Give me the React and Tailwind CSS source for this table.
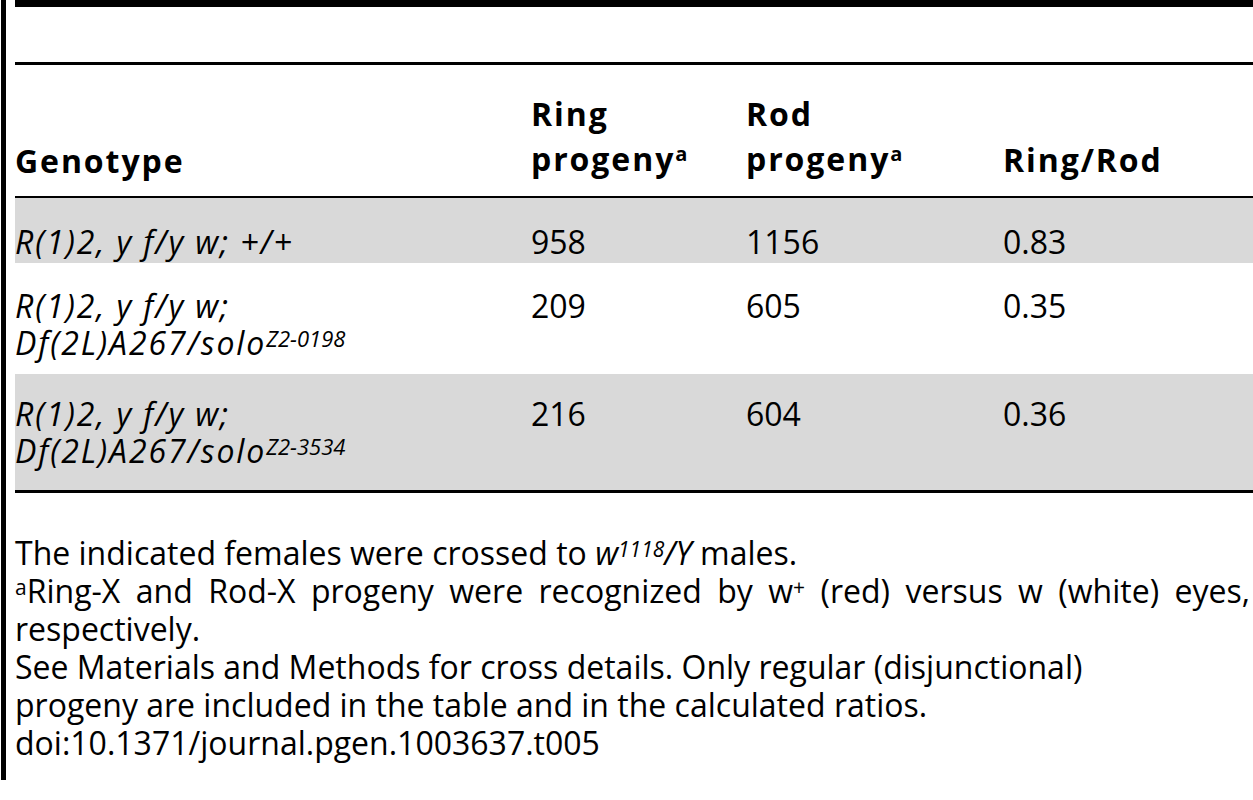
import React from 'react';

const rows = [
  { g1: 'R(1)2, y f/y w; +/+', g2: null, ring: '958', rod: '1156', ratio: '0.83', shade: true, h: 'h-[66px]', pt: 'pt-[25px]' },
  { g1: 'R(1)2, y f/y w;', g2: 'Z2-0198', ring: '209', rod: '605', ratio: '0.35', shade: false, h: 'h-[111px]', pt: 'pt-[24px]' },
  { g1: 'R(1)2, y f/y w;', g2: 'Z2-3534', ring: '216', rod: '604', ratio: '0.36', shade: true, h: 'h-[116px]', pt: 'pt-[21px]' },
];

const App = () => {
  return (
    <div className="w-[1253px] h-[800px] bg-white text-black font-['Open_Sans',sans-serif] text-[32px] leading-[37px] pl-px">
      <div className="h-[780px] border-l-[5px] border-black pl-[9px]">
        <div className="border-t-[7px] border-black h-[62px]" />
        <table className="w-full border-collapse table-fixed">
          <colgroup>
            <col className="w-[516px]" />
            <col className="w-[215px]" />
            <col className="w-[257px]" />
            <col />
          </colgroup>
          <thead>
            <tr className="h-[133px] border-t-[3px] border-b-[2px] border-black font-bold tracking-[0.06em] leading-[45px]">
              <th className="text-left align-bottom pb-[13px] font-bold">Genotype</th>
              <th className="text-left align-bottom pb-[15px] font-bold">
                Ring
                <br />
                progeny<sup className="text-[20px] tracking-normal">a</sup>
              </th>
              <th className="text-left align-bottom pb-[15px] font-bold">
                Rod
                <br />
                progeny<sup className="text-[20px] tracking-normal">a</sup>
              </th>
              <th className="text-left align-bottom pb-[14px] font-bold">Ring/Rod</th>
            </tr>
          </thead>
          <tbody>
            {rows.map((r, i) => (
              <tr key={i} className={`${r.h} ${r.shade ? 'bg-[#d9d9d9]' : ''}`}>
                <td className={`align-top ${r.pt} italic tracking-[0.06em]`}>
                  {r.g1}
                  {r.g2 && (
                    <>
                      <br />
                      Df(2L)A267/solo<sup className="text-[22px] top-[-8px] tracking-normal">{r.g2}</sup>
                    </>
                  )}
                </td>
                <td className={`align-top ${r.pt}`}>{r.ring}</td>
                <td className={`align-top ${r.pt}`}>{r.rod}</td>
                <td className={`align-top ${r.pt}`}>{r.ratio}</td>
              </tr>
            ))}
          </tbody>
        </table>
        <div className="border-t-[3px] border-black pt-[41px] leading-[38px] pr-[3px]">
          <p>
            The indicated females were crossed to <i>w</i>
            <sup className="text-[21px] italic top-[-8px]">1118</sup>
            <i>/Y</i> males.
          </p>
          <p className="text-justify">
            <sup className="text-[21px] top-[-8px]">a</sup>Ring-X and Rod-X progeny were recognized by w<sup className="text-[21px] top-[-8px]">+</sup> (red) versus w (white) eyes, respectively.
          </p>
          <p>
            See Materials and Methods for cross details. Only regular (disjunctional)
            <br />
            progeny are included in the table and in the calculated ratios.
          </p>
          <p>doi:10.1371/journal.pgen.1003637.t005</p>
        </div>
      </div>
    </div>
  );
};

export default App;
